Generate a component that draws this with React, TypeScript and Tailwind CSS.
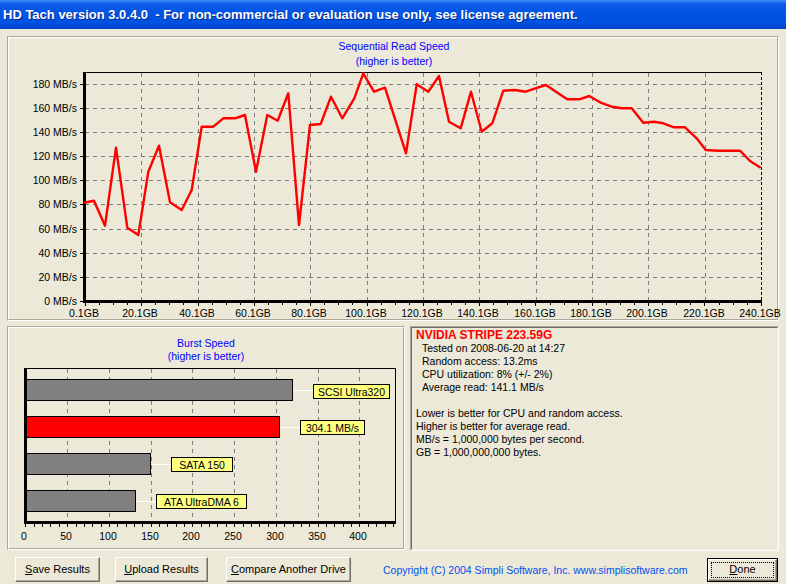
import React from "react";

// read speed samples, already in page pixels (x, y)
const SEQ: [number, number][] = [
  [84, 202.7], [94, 200.7], [105, 225.7], [116, 147.7], [127.3, 227.7], [138.3, 235],
  [148.3, 171.7], [159, 145.7], [170, 202.3], [181.7, 210], [191.7, 190], [201.7, 126.7],
  [213.3, 126.7], [223.3, 118.3], [235, 118.3], [245, 115], [256, 171.7], [267.3, 115],
  [277.7, 120.7], [288.3, 93.3], [299, 225], [310, 125], [320.7, 124], [331, 96.7],
  [342.3, 118.3], [354.3, 98.3], [363.3, 73.3], [374, 91.7], [385, 87.7], [406, 153.3],
  [416.7, 84.3], [428.3, 91.7], [439, 76], [449, 121.7], [460.7, 128.3], [471, 91.7],
  [481.7, 131.7], [492.3, 123.3], [503.3, 90.7], [515, 90], [525.7, 91.7], [538.3, 87.3],
  [546, 85], [556.7, 92.3], [567.3, 99.3], [579.3, 99.3], [589.3, 96], [600, 102.3],
  [611.7, 106.7], [621.7, 108.3], [631.7, 108.3], [643.3, 122.7], [654, 121.7], [663.3, 123.3],
  [674, 127.3], [685, 127.3], [696.7, 138.3], [705.7, 150], [718.3, 150.7], [740, 150.7],
  [750, 161], [760.7, 167.7],
];

const BURST = [
  { label: "SCSI Ultra320", end: 292.5, y: 379.5, fill: "#808080", bx: 313.5, by: 384.5, bw: 76 },
  { label: "304.1 MB/s", end: 279.5, y: 416.5, fill: "#ff0000", bx: 300.5, by: 420.5, bw: 64 },
  { label: "SATA 150", end: 150.5, y: 453.5, fill: "#808080", bx: 171.5, by: 457.5, bw: 61 },
  { label: "ATA UltraDMA 6", end: 135.5, y: 490.5, fill: "#808080", bx: 156.5, by: 494.5, bw: 90 },
];

const gx = (k: number) => Math.floor(85.4 + k * 56.33) + 0.5;
const gy = (v: number) => Math.floor(301.4 - v * 1.206) + 0.5;
const bx = (k: number) => Math.floor(25.9 + k * 41.76) + 0.5;

function SeqChart() {
  const steps = Array.from({ length: 13 }, (_, k) => k);
  const levels = [20, 40, 60, 80, 100, 120, 140, 160, 180];
  const minor = Array.from({ length: 49 }, (_, i) => Math.floor(85.4 + i * 14.08) + 0.5);
  return (
    <svg width={770} height={281} className="block overflow-visible">
      <g transform="translate(-9 -38)">
        <text x={394} y={46} fontSize={10.5} fill="#0000ff" textAnchor="middle" dominantBaseline="central">
          Sequential Read Speed
        </text>
        <text x={394} y={61} fontSize={10.5} fill="#0000ff" textAnchor="middle" dominantBaseline="central">
          (higher is better)
        </text>

        {/* grid */}
        {levels.map((v) => (
          <line key={v} x1={85} x2={761} y1={gy(v)} y2={gy(v)} stroke="#7b7b7b" strokeDasharray="4 4" shapeRendering="crispEdges" />
        ))}
        {steps.slice(1, 12).map((k) => (
          <line key={k} x1={gx(k)} x2={gx(k)} y1={73} y2={300} stroke="#7b7b7b" strokeDasharray="4 4" shapeRendering="crispEdges" />
        ))}

        {/* frame */}
        <line x1={83} x2={762} y1={72.5} y2={72.5} stroke="#000" shapeRendering="crispEdges" />
        <line x1={761.5} x2={761.5} y1={72} y2={301} stroke="#000" strokeDasharray="3 2" shapeRendering="crispEdges" />
        <line x1={84.5} x2={84.5} y1={72} y2={302.5} stroke="#000" strokeWidth={3} shapeRendering="crispEdges" />
        <line x1={83} x2={762} y1={301} y2={301} stroke="#000" strokeWidth={3} shapeRendering="crispEdges" />

        {/* ticks */}
        {minor.map((x, i) => (
          <line key={i} x1={x} x2={x} y1={302} y2={i % 4 === 0 ? 306 : 305} stroke="#000" shapeRendering="crispEdges" />
        ))}
        {[0, ...levels].map((v) => (
          <line key={v} x1={80} x2={83} y1={gy(v)} y2={gy(v)} stroke="#000" shapeRendering="crispEdges" />
        ))}

        {/* labels */}
        {[0, ...levels].map((v) => (
          <text key={v} x={77} y={gy(v) - 1} fontSize={10.5} textAnchor="end" dominantBaseline="central" fill="#000">
            {v} MB/s
          </text>
        ))}
        {steps.map((k) => (
          <text key={k} x={gx(k) - 1.5} y={313} fontSize={10.5} textAnchor="middle" dominantBaseline="central" fill="#000">
            {k * 20}.1GB
          </text>
        ))}

        <polyline
          points={SEQ.map((p) => p.join(",")).join(" ")}
          fill="none"
          stroke="#ff0000"
          strokeWidth={2.4}
          strokeLinejoin="round"
        />
      </g>
    </svg>
  );
}

function BurstChart() {
  const minor = Array.from({ length: 45 }, (_, i) => Math.floor(25.9 + i * 8.352) + 0.5);
  return (
    <svg width={394} height={220} className="block">
      <g transform="translate(-9 -328)">
        <text x={206} y={343} fontSize={10.5} fill="#0000ff" textAnchor="middle" dominantBaseline="central">
          Burst Speed
        </text>
        <text x={206} y={356} fontSize={10.5} fill="#0000ff" textAnchor="middle" dominantBaseline="central">
          (higher is better)
        </text>

        {[1, 2, 3, 4, 5, 6, 7, 8].map((k) => (
          <line key={k} x1={bx(k)} x2={bx(k)} y1={369} y2={521} stroke="#7b7b7b" strokeDasharray="4 4" shapeRendering="crispEdges" />
        ))}

        {BURST.map((b) => (
          <g key={b.label}>
            <rect x={24.5} y={b.y} width={b.end - 24.5} height={21} fill={b.fill} stroke="#000" shapeRendering="crispEdges" />
            <line x1={b.end + 0.5} x2={b.bx} y1={b.y + 11} y2={b.y + 11} stroke="#fff" shapeRendering="crispEdges" />
            <rect x={b.bx} y={b.by} width={b.bw} height={14} fill="#ffff80" stroke="#000" shapeRendering="crispEdges" />
            <text x={b.bx + b.bw / 2} y={b.by + 7.5} fontSize={10.5} textAnchor="middle" dominantBaseline="central" fill="#000">
              {b.label}
            </text>
          </g>
        ))}

        <line x1={24} x2={396} y1={368.5} y2={368.5} stroke="#000" shapeRendering="crispEdges" />
        <line x1={395.5} x2={395.5} y1={368} y2={523} stroke="#000" shapeRendering="crispEdges" />
        <line x1={25.5} x2={25.5} y1={368} y2={524} stroke="#000" strokeWidth={3} shapeRendering="crispEdges" />
        <line x1={24} x2={396} y1={522.5} y2={522.5} stroke="#000" strokeWidth={3} shapeRendering="crispEdges" />

        {minor.map((x, i) => (
          <line key={i} x1={x} x2={x} y1={524} y2={527} stroke="#000" shapeRendering="crispEdges" />
        ))}
        {[0, 1, 2, 3, 4, 5, 6, 7, 8].map((k) => (
          <text key={k} x={bx(k) - 1.5} y={536} fontSize={10.5} textAnchor="middle" dominantBaseline="central" fill="#000">
            {k * 50}
          </text>
        ))}
      </g>
    </svg>
  );
}

function Etched({ className, children }: { className: string; children: React.ReactNode }) {
  return (
    <div className={`border border-t-[#aca899] border-l-[#aca899] border-b-white border-r-white ${className}`}>
      <div className="h-full border border-t-white border-l-white border-b-[#aca899] border-r-[#aca899]">
        {children}
      </div>
    </div>
  );
}

function Btn({ className, children }: { className: string; children: React.ReactNode }) {
  return (
    <div
      className={`h-[25px] flex items-center justify-center border border-t-white border-l-white border-b-[#716f64] border-r-[#716f64] shadow-[inset_-1px_-1px_0_#aca899] text-[11px] ${className}`}
    >
      {children}
    </div>
  );
}

export default function App() {
  return (
    <div className="w-[786px] h-[584px] overflow-hidden bg-[#ece9d8] font-['Liberation_Sans',Arial,sans-serif] text-black">
      {/* title bar */}
      <div className="h-[29px] pl-[3px] flex items-center bg-[linear-gradient(180deg,#3d8ef8_0%,#0b5be8_14%,#0055e5_45%,#0052e0_80%,#0043c6_100%)]">
        <span className="text-[13px] font-bold text-white whitespace-pre [text-shadow:1px_1px_0_#0a2a8f]">
          HD Tach version 3.0.4.0  - For non-commercial or evaluation use only, see license agreement.
        </span>
      </div>

      <div className="px-[7px] pt-[7px]">
        <Etched className="h-[285px]">
          <SeqChart />
        </Etched>

        <div className="mt-[5px] flex gap-[5px] h-[225px]">
          <Etched className="w-[398px] h-[224px]">
            <BurstChart />
          </Etched>

          <div className="w-[371px] h-[225px] border border-t-[#aca899] border-l-[#aca899] border-b-white border-r-white">
            <div className="h-full border border-t-[#716f64] border-l-[#716f64] border-b-[#f1efe2] border-r-[#f1efe2] pl-[4px] pt-[1px] text-[10.5px] leading-[13px]">
              <div className="text-[12px] font-bold text-[#ff0000]">NVIDIA STRIPE 223.59G</div>
              <div className="pl-[6px]">
                <div>Tested on 2008-06-20 at 14:27</div>
                <div>Random access: 13.2ms</div>
                <div>CPU utilization: 8% (+/- 2%)</div>
                <div>Average read: 141.1 MB/s</div>
              </div>
              <div className="mt-[13px]">
                <div>Lower is better for CPU and random access.</div>
                <div>Higher is better for average read.</div>
                <div>MB/s = 1,000,000 bytes per second.</div>
                <div>GB = 1,000,000,000 bytes.</div>
              </div>
            </div>
          </div>
        </div>

        <div className="mt-[6px] flex items-center h-[25px]">
          <Btn className="ml-[8px] w-[85px]">
            <span className="underline">S</span>ave Results
          </Btn>
          <Btn className="ml-[15px] w-[93px]">
            <span className="underline">U</span>pload Results
          </Btn>
          <Btn className="ml-[18px] w-[125px]">
            <span className="underline">C</span>ompare Another Drive
          </Btn>
          <span className="ml-[32px] pt-[2px] text-[10.5px] text-[#0050ef]">
            Copyright (C) 2004 Simpli Software, Inc. www.simplisoftware.com
          </span>
          <div className="ml-auto mr-[1px] w-[71px] h-[24px] border border-black">
            <div className="h-full border border-t-white border-l-white border-b-[#716f64] border-r-[#716f64] shadow-[inset_-1px_-1px_0_#aca899] p-[2px]">
              <div className="h-full border border-dotted border-black flex items-center justify-center text-[11px]">
                <span className="underline">D</span>one
              </div>
            </div>
          </div>
        </div>
      </div>
    </div>
  );
}
